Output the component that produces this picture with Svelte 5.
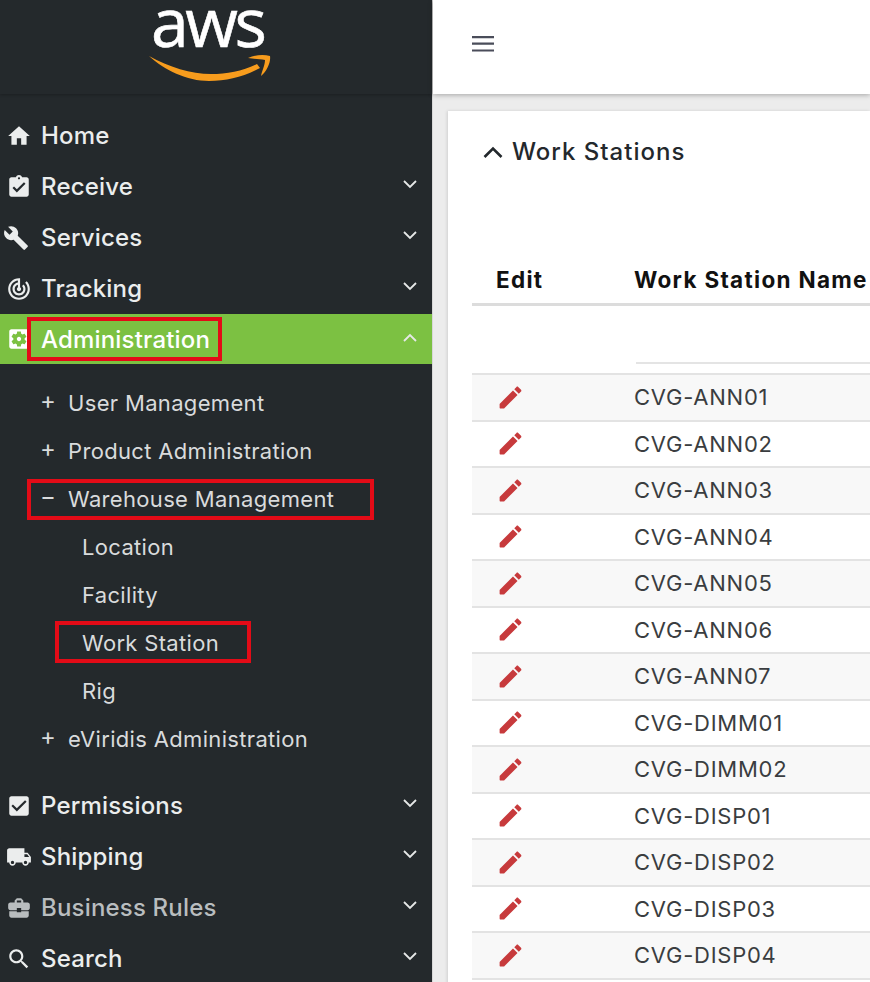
<script lang="ts">
  // material icon paths
  const ICONS = {
    home: "M10 20v-6h4v6h5v-8h3L12 3 2 12h3v8z",
    receive: "M19 3h-4.18C14.4 1.84 13.3 1 12 1c-1.3 0-2.4.84-2.82 2H5c-1.1 0-2 .9-2 2v14c0 1.1.9 2 2 2h14c1.1 0 2-.9 2-2V5c0-1.1-.9-2-2-2zm-7 0c.55 0 1 .45 1 1s-.45 1-1 1-1-.45-1-1 .45-1 1-1zm-2 14l-4-4 1.41-1.41L10 14.17l6.59-6.59L18 9l-8 8z",
    services: "M22.7 19l-9.1-9.1c.9-2.3.4-5-1.5-6.9-2-2-5-2.4-7.4-1.3L9 6 6 9 1.6 4.7C.4 7.1.9 10.1 2.9 12.1c1.9 1.9 4.6 2.4 6.9 1.5l9.1 9.1c.4.4 1 .4 1.4 0l2.3-2.3c.5-.4.5-1.1.1-1.4z",
    tracking: "M19.07 4.93l-1.41 1.41C19.1 7.79 20 9.79 20 12c0 4.42-3.58 8-8 8s-8-3.58-8-8c0-4.08 3.05-7.44 7-7.93v2.02C8.16 6.57 6 9.03 6 12c0 3.31 2.69 6 6 6s6-2.69 6-6c0-1.66-.67-3.16-1.76-4.24l-1.41 1.41C15.55 9.9 16 10.9 16 12c0 2.21-1.79 4-4 4s-4-1.79-4-4c0-1.86 1.28-3.41 3-3.86v2.14c-.6.35-1 .98-1 1.72 0 1.1.9 2 2 2s2-.9 2-2c0-.74-.4-1.38-1-1.72V2h-1C6.48 2 2 6.48 2 12s4.48 10 10 10 10-4.48 10-10c0-2.76-1.12-5.26-2.93-7.07z",
    admin: "M12 10c-1.1 0-2 .9-2 2s.9 2 2 2 2-.9 2-2-.9-2-2-2zm7-7H5c-1.1 0-2 .9-2 2v14c0 1.1.9 2 2 2h14c1.1 0 2-.9 2-2V5c0-1.1-.9-2-2-2zm-1.75 9c0 .23-.02.46-.05.68l1.48 1.16c.13.11.17.3.08.45l-1.4 2.42c-.09.15-.27.21-.43.15l-1.74-.7c-.36.28-.76.51-1.18.69l-.26 1.85c-.03.17-.18.3-.35.3h-2.8c-.17 0-.32-.13-.35-.29l-.26-1.85c-.43-.18-.82-.41-1.18-.69l-1.74.7c-.16.06-.34 0-.43-.15l-1.4-2.42c-.09-.15-.05-.34.08-.45l1.48-1.16c-.03-.23-.05-.46-.05-.69 0-.23.02-.46.05-.68l-1.48-1.16c-.13-.11-.17-.3-.08-.45l1.4-2.42c.09-.15.27-.21.43-.15l1.74.7c.36-.28.76-.51 1.18-.69l.26-1.85c.03-.17.18-.3.35-.3h2.8c.17 0 .32.13.35.29l.26 1.85c.43.18.82.41 1.18.69l1.74-.7c.16-.06.34 0 .43.15l1.4 2.42c.09.15.05.34-.08.45l-1.48 1.16c.03.23.05.46.05.69z",
    permissions: "M19 3H5c-1.11 0-2 .9-2 2v14c0 1.1.89 2 2 2h14c1.11 0 2-.9 2-2V5c0-1.1-.89-2-2-2zm-9 14l-5-5 1.41-1.41L10 14.17l7.59-7.59L19 8l-9 9z",
    shipping: "M20 8h-3V4H3c-1.1 0-2 .9-2 2v11h2c0 1.66 1.34 3 3 3s3-1.34 3-3h6c0 1.66 1.34 3 3 3s3-1.34 3-3h2v-5l-3-4zM6 18.5c-.83 0-1.5-.67-1.5-1.5s.67-1.5 1.5-1.5 1.5.67 1.5 1.5-.67 1.5-1.5 1.5zm13.5-9l1.96 2.5H17V9.5h2.5zm-1.5 9c-.83 0-1.5-.67-1.5-1.5s.67-1.5 1.5-1.5 1.5.67 1.5 1.5-.67 1.5-1.5 1.5z",
    rules: "M10 16v-1H3.01L3 19c0 1.11.89 2 2 2h14c1.11 0 2-.89 2-2v-4h-7v1h-4zm10-9h-4.01V5l-2-2h-4l-2 2v2H4c-1.1 0-2 .9-2 2v3c0 1.11.89 2 2 2h6v-2h4v2h6c1.1 0 2-.9 2-2V9c0-1.1-.9-2-2-2zm-6 0h-4V5h4v2z",
    search: "M15.5 14h-.79l-.28-.27C15.41 12.59 16 11.11 16 9.5 16 5.91 13.09 3 9.5 3S3 5.91 3 9.5 5.91 16 9.5 16c1.61 0 3.09-.59 4.23-1.57l.27.28v.79l5 4.99L20.49 19l-4.99-5zm-6 0C7.01 14 5 11.99 5 9.5S7.01 5 9.5 5 14 7.01 14 9.5 11.99 14 9.5 14z",
  };
  const EDIT_PATH = "M3 17.46v3.04c0 .28.22.5.5.5h3.04c.13 0 .26-.05.35-.15L17.81 9.94l-3.75-3.75L3.15 17.1c-.1.1-.15.22-.15.36zM20.71 7.04c.39-.39.39-1.02 0-1.41l-2.34-2.34c-.39-.39-1.02-.39-1.41 0l-1.83 1.83 3.75 3.75 1.83-1.83z";

  const topMenu = [
    { label: "Home", icon: "home" },
    { label: "Receive", icon: "receive", arrow: true },
    { label: "Services", icon: "services", arrow: true },
    { label: "Tracking", icon: "tracking", arrow: true },
  ];
  const bottomMenu = [
    { label: "Permissions", icon: "permissions", arrow: true },
    { label: "Shipping", icon: "shipping", arrow: true },
    { label: "Business Rules", icon: "rules", arrow: true, dim: true },
    { label: "Search", icon: "search", arrow: true },
  ];
  const subMenu = [
    { label: "User Management", sign: "+" },
    { label: "Product Administration", sign: "+" },
    { label: "Warehouse Management", sign: "−", mark: "mark-wh" },
    { label: "Location", leaf: true },
    { label: "Facility", leaf: true },
    { label: "Work Station", leaf: true, mark: "mark-ws" },
    { label: "Rig", leaf: true },
    { label: "eViridis Administration", sign: "+" },
  ];
  const stations = [
    "CVG-ANN01", "CVG-ANN02", "CVG-ANN03", "CVG-ANN04", "CVG-ANN05", "CVG-ANN06", "CVG-ANN07",
    "CVG-DIMM01", "CVG-DIMM02", "CVG-DISP01", "CVG-DISP02", "CVG-DISP03", "CVG-DISP04",
  ];
</script>

{#snippet chevron(up)}
  <svg class="chev" viewBox="0 0 14 9" width="14" height="9" fill="none" stroke="currentColor" stroke-width="1.8">
    <path d={up ? "M1 8l6-6 6 6" : "M1 1l6 6 6-6"} />
  </svg>
{/snippet}

{#snippet menuRow(item)}
  <div class="row" class:dim={item.dim}>
    <svg class="icon {item.icon}" viewBox="0 0 24 24" width="26" height="26" fill="currentColor"><path d={ICONS[item.icon]} /></svg>
    <span class="label">{item.label}</span>
    {#if item.arrow}{@render chevron(false)}{/if}
  </div>
{/snippet}

<div class="page">
  <aside class="sidebar">
    <div class="brand">
      <span class="aws">aws</span>
      <svg class="smile" viewBox="0 0 122 28" width="122" height="28">
        <path d="M0 3C20 14 42 21 62 21c16 0 32-3 46-10l3 4C94 24 78 28 60 28 38 28 15 17 0 3z" fill="#f79c1d" />
        <path d="M99 5c7-3 15-4 22-2 1 6-3 15-9 20 1-5 4-11 4-16-5-1-11-1-17-2z" fill="#f79c1d" />
      </svg>
    </div>
    <nav class="menu">
      {#each topMenu as item}
        {@render menuRow(item)}
      {/each}
      <div class="row active">
        <svg class="icon" viewBox="0 0 24 24" width="26" height="26" fill="currentColor"><path d={ICONS.admin} /></svg>
        <span class="label mark-admin">Administration</span>
        {@render chevron(true)}
      </div>
      <div class="sub">
        {#each subMenu as s}
          <div class="sub-row" class:leaf={s.leaf}>
            {#if s.sign}<span class="sign">{s.sign}</span>{/if}
            <span class={s.mark}>{s.label}</span>
          </div>
        {/each}
      </div>
      {#each bottomMenu as item}
        {@render menuRow(item)}
      {/each}
    </nav>
  </aside>

  <main class="main">
    <header class="topbar">
      <svg viewBox="0 0 22 16" width="22" height="16" fill="#4a4d5a"><path d="M0 0h22v2.2H0zM0 6.6h22v2.2H0zM0 13.4h22v2.2H0z" /></svg>
    </header>
    <section class="card">
      <h2 class="title">
        <svg viewBox="0 0 20 12" width="20" height="12" fill="none" stroke="#23282c" stroke-width="2.6"><path d="M1.5 11l8.5-8.5 8.5 8.5" /></svg>
        Work Stations
      </h2>
      <table class="grid">
        <thead>
          <tr class="head">
            <th class="col-edit">Edit</th>
            <th>Work Station Name</th>
          </tr>
          <tr class="filter">
            <td></td>
            <td><div class="filter-line"></div></td>
          </tr>
        </thead>
        <tbody>
          {#each stations as name, i}
            <tr class:odd={i % 2 === 0}>
              <td class="cell-edit">
                <svg viewBox="0 0 24 24" width="29" height="29" fill="#c73a3c"><path d={EDIT_PATH} /></svg>
              </td>
              <td>{name}</td>
            </tr>
          {/each}
        </tbody>
      </table>
    </section>
  </main>
</div>

<style>
  :global(body) {
    margin: 0;
    overflow: hidden;
  }

  .page {
    display: flex;
    width: 870px;
    height: 982px;
    overflow: hidden;
    font-family: Inter, "Liberation Sans", sans-serif;
  }

  .sidebar {
    flex: 0 0 432px;
    background: #24292c;
    color: #ebeded;
    border-right: 1px solid #d8d8d8;
  }

  .brand {
    height: 94px;
    box-sizing: border-box;
    padding-left: 149px;
    box-shadow: 0 1px 3px rgba(0, 0, 0, 0.25);
  }

  .aws {
    display: block;
    margin-left: 2px;
    font-family: "Open Sans", sans-serif;
    font-size: 68px;
    line-height: 42px;
    height: 42px;
    letter-spacing: -3.5px;
    color: #fff;
    -webkit-text-stroke: 0.6px #fff;
  }

  .smile {
    display: block;
    margin-top: 11px;
  }

  .menu {
    padding-top: 16px;
  }

  .row {
    display: flex;
    align-items: center;
    height: 51px;
    padding: 0 13px 0 5.5px;
    font-size: 24px;
    letter-spacing: 0.18px;
    font-weight: 500;
  }

  .row .icon {
    flex: none;
    margin-right: 9.5px;
  }

  .row .icon.services {
    margin-left: -3px;
    margin-right: 12.5px;
  }

  .label {
    flex: 1;
    position: relative;
  }

  .row.dim {
    color: #b9bdbf;
  }

  .row.active {
    background: #7cc142;
    color: #fff;
    height: 50px;
  }

  .row.active .label {
    flex: none;
    margin-right: auto;
  }

  .chev {
    flex: none;
    margin: 0 2px 4px 0;
    color: #e6e8e8;
  }

  .mark-admin::after,
  .mark-wh::after,
  .mark-ws::after {
    content: "";
    position: absolute;
    border: 4px solid #e30b17;
  }

  .mark-admin::after {
    left: -14px;
    right: -12px;
    top: -8px;
    bottom: -7px;
  }

  .sub {
    padding: 15px 0 17px;
  }

  .sub-row {
    display: flex;
    align-items: center;
    height: 48px;
    padding-left: 40px;
    font-size: 22px;
    letter-spacing: 0.33px;
    color: #d9dbdc;
  }

  .sub-row span:last-child {
    position: relative;
  }

  .sub-row.leaf {
    padding-left: 82px;
  }

  .sign {
    width: 28px;
    font-size: 24px;
    margin-bottom: 6px;
    letter-spacing: 0;
  }

  .mark-wh::after {
    left: -41px;
    right: -40px;
    top: -7px;
    bottom: -8px;
  }

  .mark-ws::after {
    left: -27px;
    right: -32px;
    top: -9px;
    bottom: -7px;
  }

  .main {
    flex: 1;
    min-width: 0;
    background: #ececec;
  }

  .topbar {
    height: 94px;
    box-sizing: border-box;
    background: #fff;
    display: flex;
    align-items: center;
    padding: 0 0 7px 39px;
    box-shadow: 0 1px 5px rgba(0, 0, 0, 0.3);
    position: relative;
  }

  .card {
    margin: 17px 0 0 15px;
    height: 900px;
    background: #fff;
    padding-left: 24px;
    box-shadow: -1px 0 3px rgba(0, 0, 0, 0.12);
  }

  .title {
    margin: 0;
    padding-top: 23px;
    display: flex;
    align-items: center;
    gap: 9px;
    padding-left: 11px;
    height: 35px;
    font-size: 24px;
    letter-spacing: 1px;
    font-weight: 500;
    color: #23282c;
  }

  .grid {
    margin-top: 86px;
    width: 500px;
    border-collapse: collapse;
    table-layout: fixed;
    font-size: 22px;
    letter-spacing: 0.75px;
    color: #3a3d40;
  }

  .col-edit {
    width: 138px;
  }

  .head th {
    height: 48px;
    padding: 0;
    text-align: left;
    font-size: 22.5px;
    font-weight: 700;
    letter-spacing: 1.3px;
    color: #111;
    border-bottom: 3px solid #dcdcdc;
  }

  .head th.col-edit {
    padding-left: 24px;
  }

  .filter td {
    height: 67px;
    padding: 0;
    border-bottom: 2px solid #e3e3e3;
  }

  .filter-line {
    height: 2px;
    margin: 46px 0 0 2px;
    background: #e4e4e4;
  }

  tbody td {
    height: 44.5px;
    padding: 0;
    border-bottom: 2px solid #e3e3e3;
  }

  tbody tr.odd {
    background: #f8f8f8;
  }

  .cell-edit {
    padding-left: 23.5px !important;
  }

  .cell-edit svg {
    display: block;
  }
</style>
